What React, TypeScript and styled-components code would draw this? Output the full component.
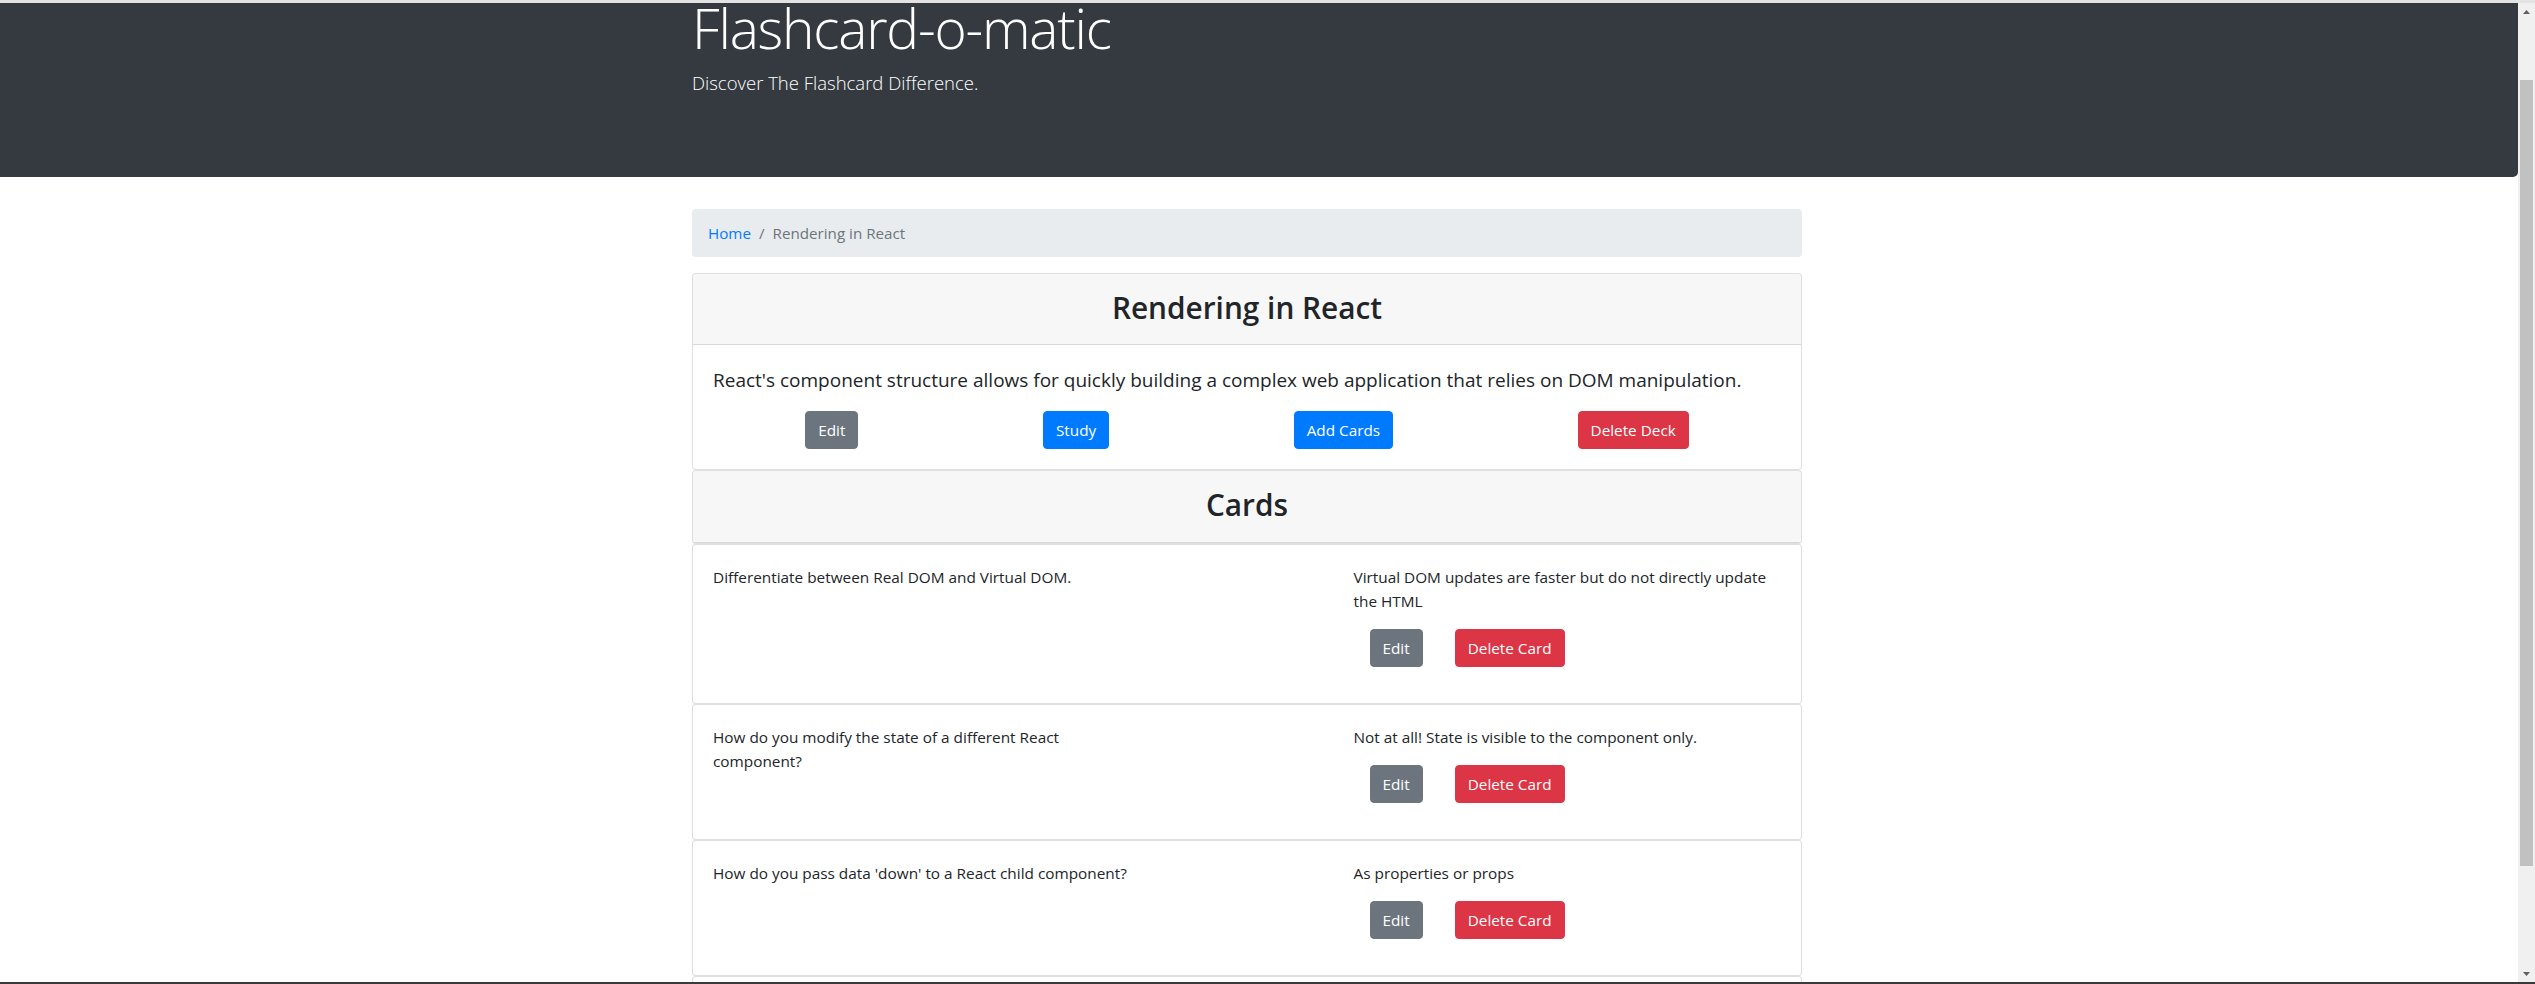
import React from 'react'
import styled, { createGlobalStyle } from 'styled-components'

interface Flashcard {
  id: number
  front: string
  back: string
}

const deck = {
  name: 'Rendering in React',
  description:
    "React's component structure allows for quickly building a complex web application that relies on DOM manipulation.",
}

const cards: Flashcard[] = [
  {
    id: 1,
    front: 'Differentiate between Real DOM and Virtual DOM.',
    back: 'Virtual DOM updates are faster but do not directly update the HTML',
  },
  {
    id: 2,
    front: 'How do you modify the state of a different React component?',
    back: 'Not at all! State is visible to the component only.',
  },
  {
    id: 3,
    front: "How do you pass data 'down' to a React child component?",
    back: 'As properties or props',
  },
  {
    id: 4,
    front: 'What is JSX?',
    back: 'A syntax extension that describes what the UI should look like.',
  },
]

const colors = {
  primary: '#007bff',
  secondary: '#6c757d',
  danger: '#dc3545',
}

const GlobalStyle = createGlobalStyle`
  *, *::before, *::after {
    box-sizing: border-box;
  }
  html, body {
    margin: 0;
    padding: 0;
    height: 100%;
    overflow: hidden;
    background: #fff;
  }
  body {
    font-family: 'Open Sans', 'Liberation Sans', sans-serif;
    color: #212529;
  }
  #root {
    height: 100%;
  }
`

const Window = styled.div`
  height: 100vh;
  display: grid;
  grid-template-rows: 3px minmax(0, 1fr) 2px;
`

const TopStrip = styled.div`
  background: #e3e3e3;
`

const BottomEdge = styled.div`
  background: #3a3a3a;
`

const Frame = styled.div`
  display: grid;
  grid-template-columns: minmax(0, 1fr) 17px;
  min-height: 0;
`

const Viewport = styled.div`
  overflow: hidden;
  min-width: 0;
`

const Scrollbar = styled.div`
  background: #f0f0f0;
  display: flex;
  flex-direction: column;
`

const ArrowButton = styled.div`
  height: 17px;
  display: flex;
  align-items: center;
  justify-content: center;
  color: #606060;
`

const Track = styled.div`
  flex: 1;
  padding: 0 2px;
`

const Thumb = styled.div<{ $top: number; $size: number }>`
  margin-top: ${(p) => p.$top}px;
  height: ${(p) => p.$size}px;
  background: #c1c1c1;
`

const Jumbotron = styled.header`
  background: #343a40;
  color: #fff;
  padding: 0 0 63px;
  margin-bottom: 32px;
  border-radius: 0 0 5px 0;
`

const Shell = styled.div`
  padding-right: 24px;
`

const Container = styled.div`
  width: 1140px;
  margin: 0 auto;
  padding: 0 15px;
`

const Title = styled.h1`
  margin: 0 0 15px;
  font-size: 55px;
  line-height: 50px;
  font-weight: 300;
  letter-spacing: -1.2px;
`

const Lead = styled.p`
  margin: 0 0 16px;
  font-size: 18.5px;
  line-height: 30px;
  font-weight: 300;
`

const Breadcrumb = styled.ol`
  display: flex;
  list-style: none;
  margin: 0 0 16px;
  padding: 12px 16px;
  background: #e9ecef;
  border-radius: 4px;
  font-size: 15.2px;
  line-height: 24px;

  & > li + li::before {
    content: '/';
    color: #6c757d;
    padding: 0 8px;
  }
`

const Crumb = styled.li<{ $active?: boolean }>`
  color: ${(p) => (p.$active ? '#6c757d' : colors.primary)};
`

const CrumbLink = styled.a`
  color: ${colors.primary};
  text-decoration: none;
`

const Card = styled.section`
  border: 1px solid rgba(0, 0, 0, 0.125);
  border-radius: 4px;
  background: #fff;
  overflow: hidden;
`

const CardHeader = styled.div`
  background: rgba(0, 0, 0, 0.03);
  padding: 12px 20px;
  border-bottom: 1px solid rgba(0, 0, 0, 0.125);
`

const HeaderTitle = styled.h2`
  margin: 0 0 5px;
  padding-top: 3px;
  text-align: center;
  font-size: 29.8px;
  line-height: 38.4px;
  font-weight: 600;
`

const CardBody = styled.div`
  padding: 20px;
`

const Description = styled.p`
  margin: 0 0 16px;
  font-size: 19px;
  line-height: 30px;
`

const DeckActions = styled.div`
  display: flex;
  justify-content: space-around;
`

const Button = styled.button<{ $variant: keyof typeof colors }>`
  font-family: inherit;
  font-size: 15.3px;
  line-height: 24px;
  font-weight: 400;
  padding: 6px 12px;
  color: #fff;
  background: ${(p) => colors[p.$variant]};
  border: 1px solid ${(p) => colors[p.$variant]};
  border-radius: 4px;
  cursor: pointer;
`

const CardButton = styled(Button)`
  margin: 0 16px;
`

const Row = styled.div`
  display: flex;
  margin: 0 -15px;
  font-size: 15.35px;
  line-height: 24px;
`

const Column = styled.div<{ $span: number }>`
  flex: 0 0 ${(p) => (p.$span / 12) * 100}%;
  padding: 0 15px;
`

const Front = styled.p`
  margin: 0;
  max-width: 427px;
`

const Back = styled.p`
  margin: 0 0 16px;
`

const CardActions = styled.div`
  display: flex;
  margin-bottom: 16px;
`

function ArrowIcon({ up }: { up?: boolean }) {
  return (
    <svg width="7" height="4" viewBox="0 0 7 4" fill="currentColor">
      {up ? <path d="M3.5 0L7 4H0z" /> : <path d="M0 0h7L3.5 4z" />}
    </svg>
  )
}

function CardItem({ card }: { card: Flashcard }) {
  return (
    <Card>
      <CardBody>
        <Row>
          <Column $span={7}>
            <Front>{card.front}</Front>
          </Column>
          <Column $span={5}>
            <Back>{card.back}</Back>
            <CardActions>
              <CardButton $variant="secondary">Edit</CardButton>
              <CardButton $variant="danger">Delete Card</CardButton>
            </CardActions>
          </Column>
        </Row>
      </CardBody>
    </Card>
  )
}

export default function App() {
  return (
    <>
      <GlobalStyle />
      <Window>
        <TopStrip />
        <Frame>
          <Viewport>
            <Jumbotron>
              <Shell>
                <Container>
                  <Title>Flashcard-o-matic</Title>
                  <Lead>Discover The Flashcard Difference.</Lead>
                </Container>
              </Shell>
            </Jumbotron>
            <Shell>
              <Container>
                <Breadcrumb>
                  <Crumb>
                    <CrumbLink href="#">Home</CrumbLink>
                  </Crumb>
                  <Crumb $active>{deck.name}</Crumb>
                </Breadcrumb>

                <Card>
                  <CardHeader>
                    <HeaderTitle>{deck.name}</HeaderTitle>
                  </CardHeader>
                  <CardBody>
                    <Description>{deck.description}</Description>
                    <DeckActions>
                      <Button $variant="secondary">Edit</Button>
                      <Button $variant="primary">Study</Button>
                      <Button $variant="primary">Add Cards</Button>
                      <Button $variant="danger">Delete Deck</Button>
                    </DeckActions>
                  </CardBody>
                </Card>

                <Card>
                  <CardHeader>
                    <HeaderTitle>Cards</HeaderTitle>
                  </CardHeader>
                </Card>

                {cards.map((card) => (
                  <CardItem key={card.id} card={card} />
                ))}
              </Container>
            </Shell>
          </Viewport>
          <Scrollbar>
            <ArrowButton>
              <ArrowIcon up />
            </ArrowButton>
            <Track>
              <Thumb $top={60} $size={786} />
            </Track>
            <ArrowButton>
              <ArrowIcon />
            </ArrowButton>
          </Scrollbar>
        </Frame>
        <BottomEdge />
      </Window>
    </>
  )
}
